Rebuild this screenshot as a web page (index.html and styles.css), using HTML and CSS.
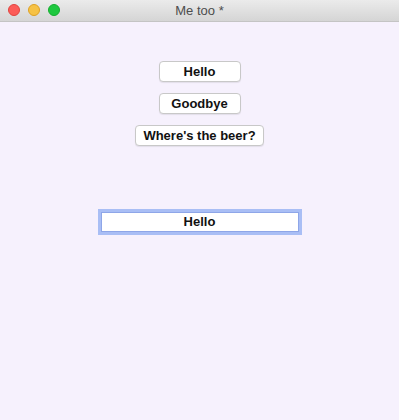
FILE: index.html
```html
<!DOCTYPE html>
<html lang="en">
<head>
    <meta charset="UTF-8">
    <meta name="viewport" content="width=device-width, initial-scale=1.0">
    <title>Me too *</title>
    <link rel="stylesheet" href="styles.css">
</head>
<body>
    <div class="window">
        <div class="titlebar">
            <div class="lights">
                <span class="light red"></span>
                <span class="light yellow"></span>
                <span class="light green"></span>
            </div>
            <div class="title">Me too *</div>
        </div>

        <div class="content">
            <div class="buttons">
                <button class="btn wide">Hello</button>
                <button class="btn wide">Goodbye</button>
                <button class="btn">Where's the beer?</button>
            </div>

            <div class="field">Hello</div>
        </div>
    </div>
</body>
</html>
```

FILE: styles.css
```css
body {
    margin: 0;
    font-family: "Liberation Sans", Arial, sans-serif;
    background-color: #f6f1fd;
}

.window {
    width: 399px;
    height: 420px;
    background-color: #f6f1fd;
}

.titlebar {
    position: relative;
    height: 21px;
    background: linear-gradient(#ebebeb, #d5d5d5);
    border-bottom: 1px solid #c4c4c4;
}

.lights {
    position: absolute;
    left: 8px;
    top: 4px;
    display: flex;
    gap: 8px;
}

.light {
    width: 12px;
    height: 12px;
    border-radius: 50%;
    box-sizing: border-box;
}

.red {
    background-color: #fc5b57;
    border: 1px solid #e0443e;
}

.yellow {
    background-color: #f6c245;
    border: 1px solid #dea123;
}

.green {
    background-color: #1ec83f;
    border: 1px solid #14ae2e;
}

.title {
    text-align: center;
    font-size: 13px;
    line-height: 21px;
    color: #4d4d4d;
}

.content {
    display: flex;
    flex-direction: column;
    align-items: center;
}

.buttons {
    display: flex;
    flex-direction: column;
    align-items: center;
    gap: 11px;
    margin-top: 39px;
}

.btn {
    height: 21px;
    padding: 0 7px;
    font-family: "Liberation Sans", Arial, sans-serif;
    font-size: 13px;
    font-weight: bold;
    color: #111;
    background-color: #fff;
    border: 1px solid #c8c8c8;
    border-radius: 4px;
    box-shadow: 0 1px 1px rgba(0, 0, 0, 0.08);
}

.btn.wide {
    width: 82px;
}

.field {
    width: 196px;
    height: 18px;
    margin-top: 66px;
    line-height: 18px;
    text-align: center;
    font-size: 13px;
    font-weight: bold;
    color: #111;
    background-color: #fff;
    border: 1px solid #8ea6e8;
    box-shadow: 0 0 0 3px #a9bef5;
}
```
